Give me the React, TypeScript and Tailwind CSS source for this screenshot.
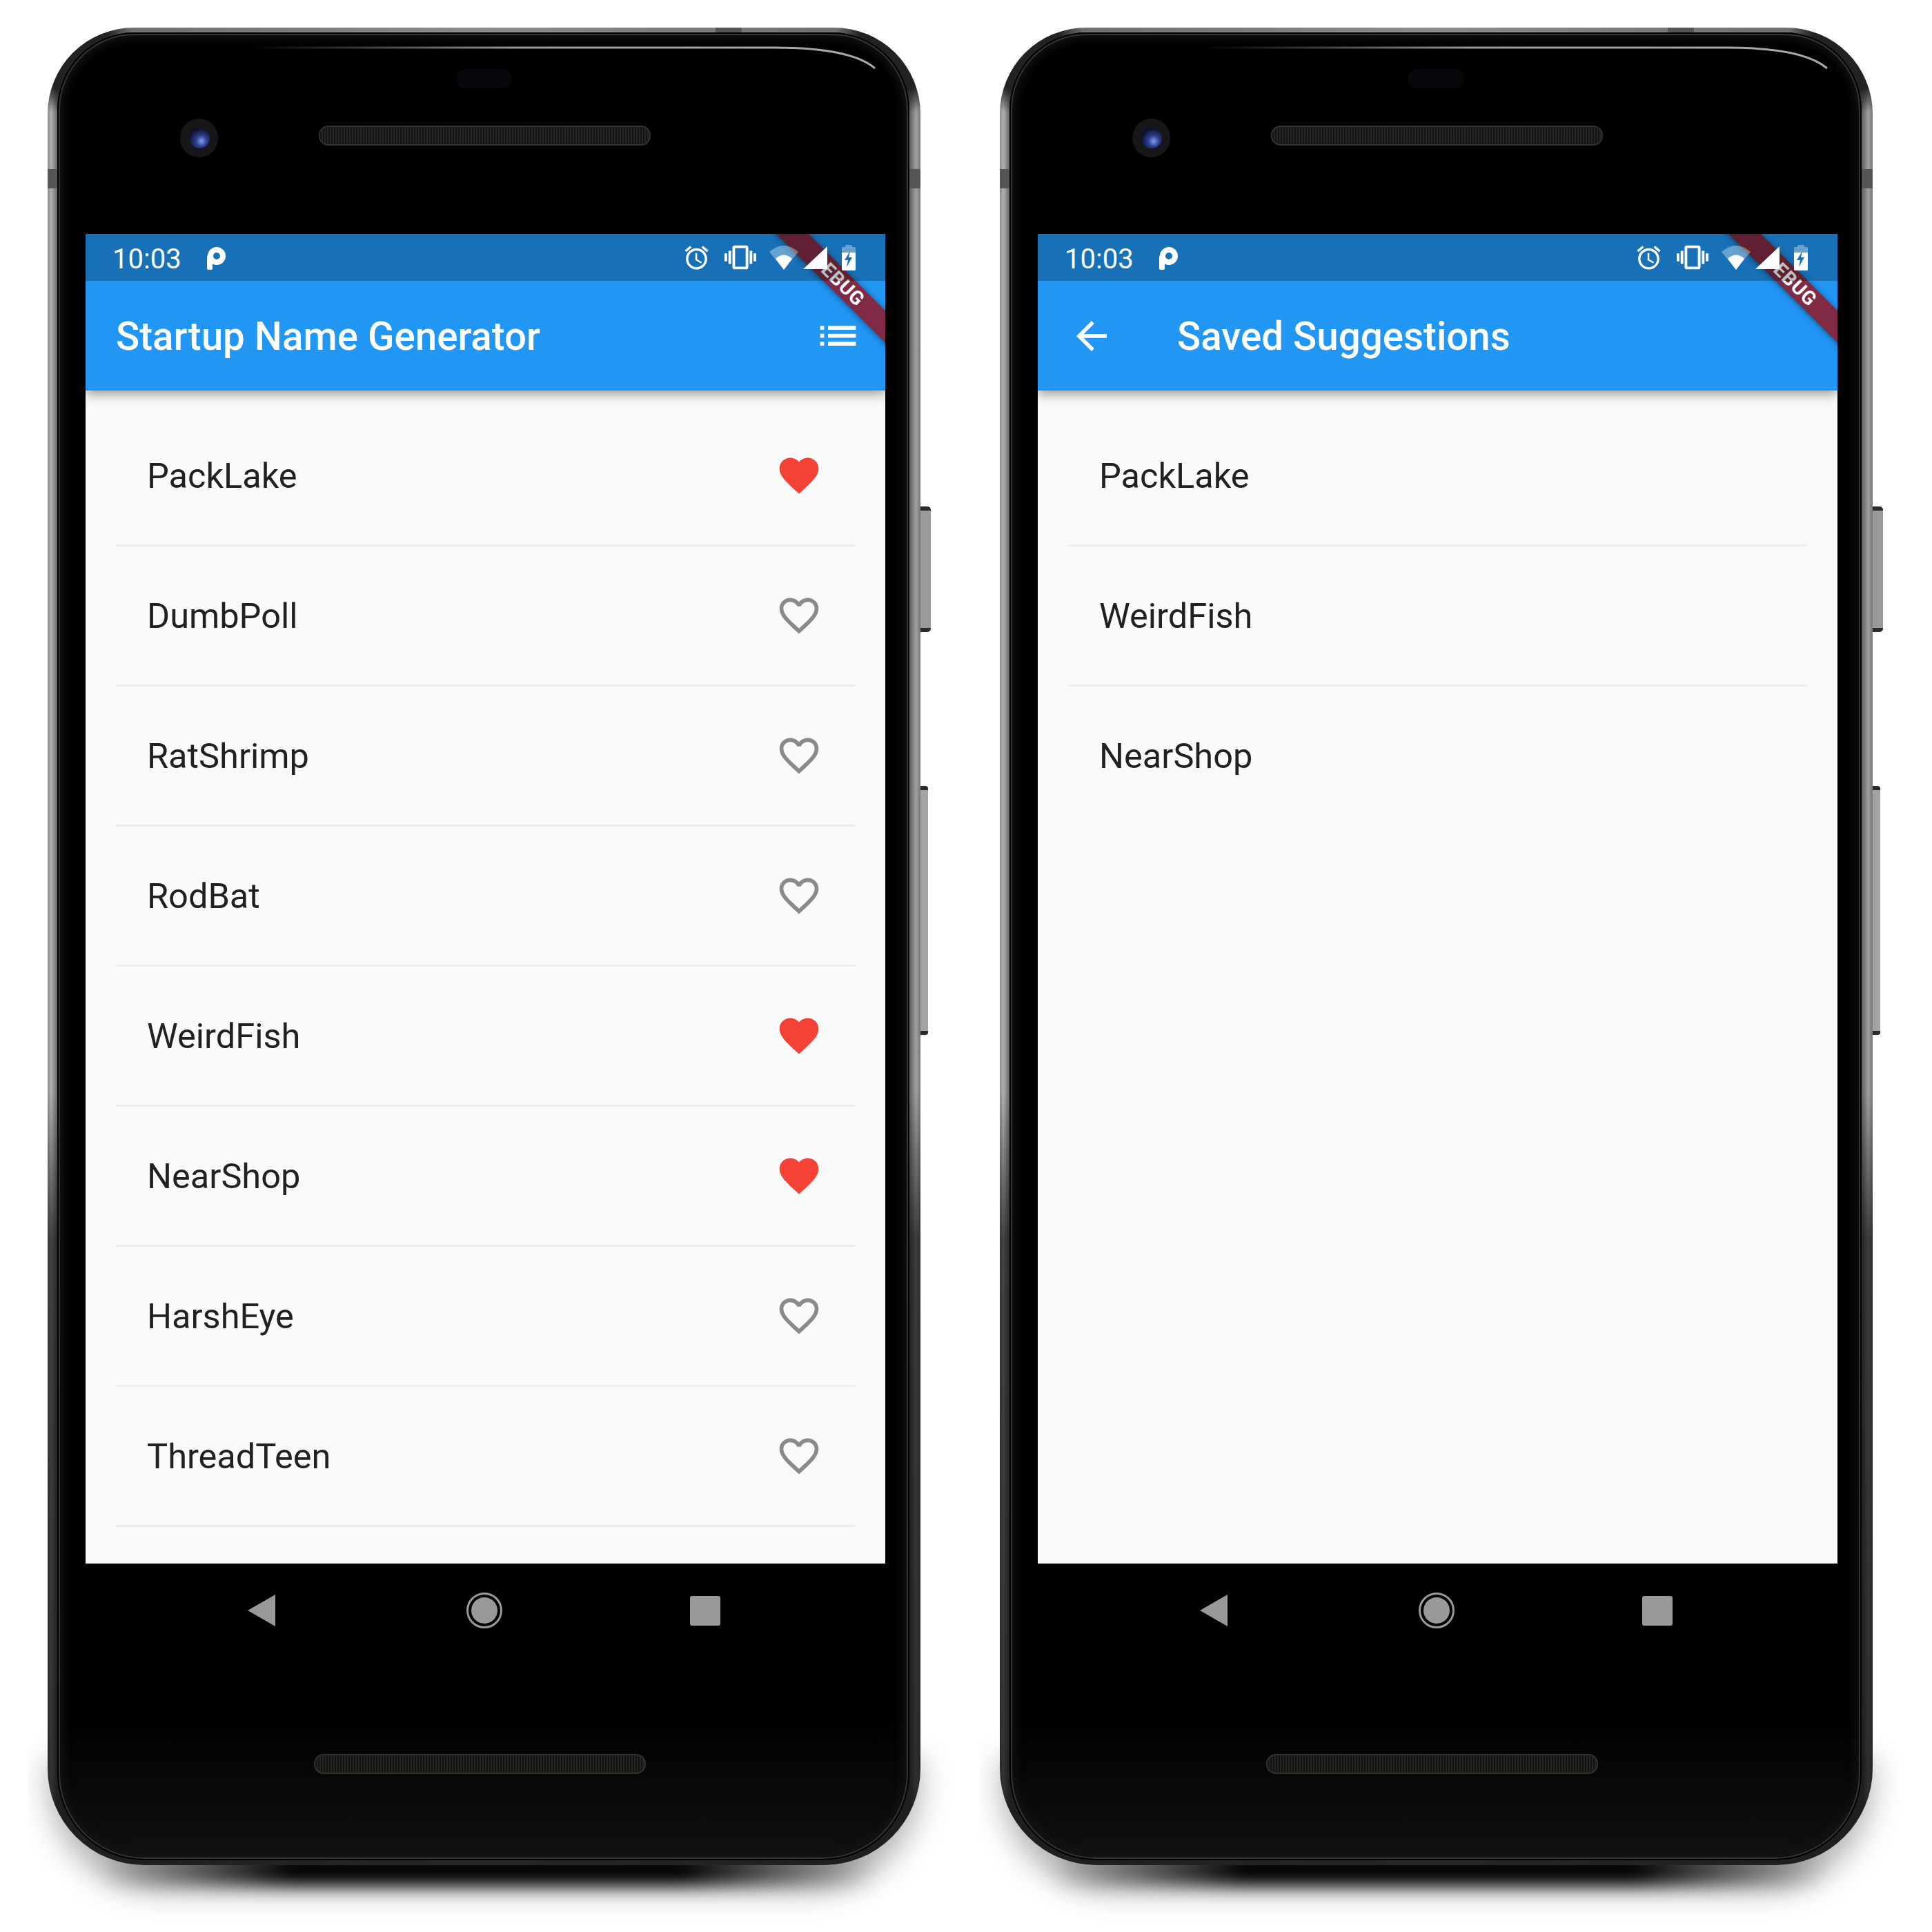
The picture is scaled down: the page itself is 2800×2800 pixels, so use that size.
import React from 'react';

const favorite =
  'M12 21.35l-1.45-1.32C5.4 15.36 2 12.28 2 8.5 2 5.42 4.42 3 7.5 3c1.74 0 3.41.81 4.5 2.09C13.09 3.81 14.76 3 16.5 3 19.58 3 22 5.42 22 8.5c0 3.78-3.4 6.86-8.55 11.54L12 21.35z';
const favoriteBorder =
  'M16.5 3c-1.74 0-3.41.81-4.5 2.09C10.91 3.81 9.24 3 7.5 3 4.42 3 2 5.42 2 8.5c0 3.78 3.4 6.86 8.55 11.54L12 21.35l1.45-1.32C18.6 15.36 22 12.28 22 8.5 22 5.42 19.58 3 16.5 3zm-4.4 15.55l-.1.1-.1-.1C7.14 14.24 4 11.39 4 8.5 4 6.5 5.5 5 7.5 5c1.54 0 3.04.99 3.57 2.36h1.87C13.46 5.99 14.96 5 16.5 5c2 0 3.5 1.5 3.5 3.5 0 2.89-3.14 5.74-7.9 10.05z';

type Item = { name: string; saved?: boolean };

const suggestions: Item[] = [
  { name: 'PackLake', saved: true },
  { name: 'DumbPoll', saved: false },
  { name: 'RatShrimp', saved: false },
  { name: 'RodBat', saved: false },
  { name: 'WeirdFish', saved: true },
  { name: 'NearShop', saved: true },
  { name: 'HarshEye', saved: false },
  { name: 'ThreadTeen', saved: false },
];

const savedList: Item[] = [{ name: 'PackLake' }, { name: 'WeirdFish' }, { name: 'NearShop' }];

const StatusBar = () => (
  <div className="relative z-10 flex h-[68px] items-center bg-black/25 pl-[39px] pr-[43px] text-white">
    <span className="pt-[5px] text-[40px] leading-none">10:03</span>
    <svg viewBox="0 0 27 33" className="ml-[37px] mt-[3px] h-[33px] w-[27px]" fill="none">
      <rect x="0" y="12" width="8" height="21" rx="2" fill="#fff" />
      <circle cx="14" cy="13" r="9" stroke="#fff" strokeWidth="8" />
    </svg>
    <div className="flex-1" />
    {/* alarm */}
    <svg viewBox="0 0 24 24" className="h-[41px] w-[41px]" fill="#fff">
      <path d="M22 5.72l-4.6-3.86-1.29 1.53 4.6 3.86L22 5.72zM7.88 3.39L6.6 1.86 2 5.71l1.29 1.53 4.59-3.85zM12.5 8H11v6l4.75 2.85.75-1.23-4-2.37V8zM12 4c-4.97 0-9 4.03-9 9s4.02 9 9 9c4.97 0 9-4.03 9-9s-4.03-9-9-9zm0 16c-3.87 0-7-3.13-7-7s3.13-7 7-7 7 3.13 7 7-3.13 7-7 7z" />
    </svg>
    {/* vibrate */}
    <svg viewBox="0 0 24 24" className="ml-[20px] h-[46px] w-[46px]" fill="#fff">
      <path d="M0 15h2V9H0v6zm3 2h2V7H3v10zm19-8v6h2V9h-2zm-3 8h2V7h-2v10zM16.5 3h-9C6.67 3 6 3.67 6 4.5v15c0 .83.67 1.5 1.5 1.5h9c.83 0 1.5-.67 1.5-1.5v-15c0-.83-.67-1.5-1.5-1.5zM16 19H8V5h8v14z" />
    </svg>
    {/* wifi */}
    <svg viewBox="0 0 42 35" className="ml-[19px] h-[35px] w-[42px]" fill="#fff">
      <path d="M0 9Q21-9 42 9L21 35Z" opacity="0.35" />
      <path d="M9 19Q21 8 33 19L21 35Z" />
    </svg>
    {/* signal */}
    <svg viewBox="0 0 35 33" className="ml-[7px] h-[33px] w-[35px]" fill="#fff">
      <polygon points="35,0 35,33 0,33" />
    </svg>
    {/* battery */}
    <svg viewBox="0 0 20 37" className="ml-[21px] h-[37px] w-[20px]" fill="#fff">
      <path d="M5 3V1.5C5 .7 5.7 0 6.5 0h7c.8 0 1.5.7 1.5 1.5V3h3.5c.8 0 1.5.7 1.5 1.5V11H0V4.500C0 3.700.7 3 1.500 3z" opacity="0.35" />
      <path d="M0 11h20v24.500c0 .8-.7 1.500-1.500 1.500h-17C.7 37 0 36.300 0 35.500z" />
      <polygon points="12,9 4,22 9,22 7,32 15,18 10,18" fill="#1f6fb3" />
    </svg>
  </div>
);

const Header = ({ title, back }: { title: string; back?: boolean }) => (
  <div className="relative z-10 h-[227px] shrink-0 overflow-hidden bg-[#2196f3] shadow-[0_5px_16px_rgba(0,0,0,0.4)]">
    {/* debug banner, the status bar darkens it */}
    <div className="absolute left-[941px] top-[50px] flex h-[33px] w-[300px] rotate-45 items-center justify-center bg-[#8b1e32]/90 shadow-[0_1px_8px_rgba(0,0,0,0.45)]">
      <span className="text-[28px] font-bold leading-none tracking-[1px] text-white">DEBUG</span>
    </div>
    <StatusBar />
    <div className="relative flex h-[159px] items-center text-white">
      {back ? (
        <>
          <svg viewBox="0 0 24 24" className="ml-[45px] h-[66px] w-[66px]" fill="#fff">
            <path d="M20 11H7.830l5.590-5.590L12 4l-8 8 8 8 1.410-1.410L7.830 13H20v-2z" />
          </svg>
          <span className="ml-[91px] pt-[3px] text-[56.5px] font-medium leading-none">{title}</span>
        </>
      ) : (
        <>
          <span className="ml-[44px] pt-[3px] text-[56.5px] font-medium leading-none">{title}</span>
          <div className="flex-1" />
          <svg viewBox="0 0 24 24" className="mr-[34px] h-[69px] w-[69px]" fill="#fff">
            <path d="M3 13h2v-2H3v2zm0 4h2v-2H3v2zm0-8h2V7H3v2zm4 4h14v-2H7v2zm0 4h14v-2H7v2zM7 7v2h14V7H7z" />
          </svg>
        </>
      )}
    </div>
  </div>
);

const Row = ({ item, divider, hearts }: { item: Item; divider: boolean; hearts: boolean }) => (
  <div
    className={`mx-[44px] flex h-[203px] items-center justify-between border-b-[3px] pl-[45px] pr-[47px] ${
      divider ? 'border-[#eeeeee]' : 'border-transparent'
    }`}
  >
    <span className="pt-[2px] text-[50.5px] leading-none text-[#212121]">{item.name}</span>
    {hearts && (
      <svg
        viewBox="0 0 24 24"
        className="h-[68px] w-[68px]"
        fill={item.saved ? '#f44336' : '#8a8a8a'}
      >
        <path d={item.saved ? favorite : favoriteBorder} />
      </svg>
    )}
  </div>
);

const NavBar = () => (
  <div className="mt-[42px] flex h-[52px] shrink-0 items-center pl-[235px]">
    <svg viewBox="0 0 40 46" className="h-[46px] w-[40px]" fill="#999999">
      <polygon points="40,0 40,46 0,23" />
    </svg>
    <div className="ml-[277px] flex h-[52px] w-[52px] items-center justify-center rounded-full border-[3px] border-[#999999]">
      <div className="h-[38px] w-[38px] rounded-full bg-[#999999]" />
    </div>
    <div className="ml-[272px] h-[43px] w-[44px] rounded-[3px] bg-[#999999]" />
  </div>
);

const Speaker = ({ className }: { className: string }) => (
  <div
    className={`h-[29px] w-[481px] shrink-0 rounded-[14px] border-[2px] border-[#33312e] bg-[repeating-linear-gradient(90deg,#141312_0px,#141312_2px,#272522_2px,#272522_4px)] ${className}`}
  />
);

const Phone = ({ title, back, items, hearts }: { title: string; back?: boolean; items: Item[]; hearts: boolean }) => (
  <div className="relative h-[2663px] w-[1265px] shrink-0">
    {/* soft shadows under the phone */}
    <div className="absolute -left-[29px] -right-[46px] top-[2440px] h-[330px] overflow-hidden">
      <div className="absolute left-[30px] right-[46px] top-[70px] h-[190px] rounded-b-[160px] bg-black/30 blur-[22px]" />
      <div className="absolute left-[100px] top-[205px] h-[48px] w-[1130px] bg-[linear-gradient(to_right,transparent,#000000_25%,#000000_75%,transparent)] blur-[12px]" />
    </div>
    {/* side buttons */}
    <div className="absolute left-[1262px] top-[694px] h-[182px] w-[18px] rounded-r-[5px] border-y-[6px] border-[#2a2a2a] bg-[#9a9a9a]" />
    <div className="absolute left-[1262px] top-[1099px] h-[361px] w-[14px] rounded-r-[4px] border-y-[6px] border-[#2a2a2a] bg-[#a3a3a3]" />
    {/* metal frame */}
    <div className="relative h-full rounded-t-[125px] rounded-b-[140px] bg-[radial-gradient(circle_at_30px_30px,#222222_60px,transparent_95px),radial-gradient(circle_at_1235px_30px,#222222_60px,transparent_95px),linear-gradient(to_bottom,transparent_58%,rgba(0,0,0,0.62)_66%,rgba(0,0,0,0.72)_100%),linear-gradient(to_right,#8a8a8a,#b0b0b0_0.4%,#6a6a6a_1.1%,#8c8c8c_50%,#6a6a6a_98.9%,#a0a0a0_99.5%,#777777)] pb-[7px] pl-[14px] pr-[16px] pt-[7px]">
      <div className="absolute left-0 top-[205px] h-[28px] w-[14px] bg-[#555555]" />
      <div className="absolute right-0 top-[205px] h-[28px] w-[16px] bg-[#555555]" />
      <div className="absolute left-[968px] top-0 h-[7px] w-[38px] bg-[#555555]" />
      <div className="relative flex h-full flex-col rounded-t-[112px] rounded-b-[126px] bg-[linear-gradient(to_bottom,#000000_92%,#111111_100%)] pl-[41px] pr-[35px] shadow-[inset_0_0_0_2px_#000000,inset_0_0_0_4px_#333333,inset_0_0_14px_8px_#141414]">
        {/* glass highlight */}
        <svg viewBox="0 0 1235 120" className="absolute left-0 top-0 h-[120px] w-[1235px]" fill="none">
          <defs>
            <linearGradient id="glass" x1="0" x2="1" y1="0" y2="0">
              <stop offset="0.12" stopColor="#888888" stopOpacity="0" />
              <stop offset="0.5" stopColor="#999999" />
              <stop offset="1" stopColor="#aaaaaa" />
            </linearGradient>
          </defs>
          <path d="M157 22H1040Q1150 22 1185 52" stroke="url(#glass)" strokeWidth="3" />
        </svg>

        {/* top bezel */}
        <div className="flex h-[292px] shrink-0 flex-col">
          <div className="ml-[536px] mt-[53px] h-[28px] w-[82px] rounded-[14px] bg-[#07070b]" />
          <div className="mt-[44px] flex items-start gap-[146px] pl-[137px]">
            <div className="flex h-[56px] w-[55px] items-center justify-center rounded-full bg-[#17171a]">
              <div className="h-[30px] w-[30px] rounded-full bg-[radial-gradient(circle_at_60%_65%,#7f9fe8_0%,#2c3f8f_30%,#0a0f2a_70%)]" />
            </div>
            <Speaker className="mt-[10px]" />
          </div>
        </div>

        <div className="flex h-[1927px] shrink-0 flex-col overflow-hidden bg-[#fafafa]">
          <Header title={title} back={back} />
          <div className="pt-[23px]">
            {items.map((item, i) => (
              <Row key={item.name} item={item} hearts={hearts} divider={hearts || i < items.length - 1} />
            ))}
          </div>
        </div>

        {/* bottom bezel */}
        <NavBar />
        <Speaker className="ml-[331px] mt-[182px]" />
      </div>
    </div>
  </div>
);

export default function App() {
  return (
    <div className="flex h-[2800px] w-[2800px] gap-[115px] overflow-hidden bg-white pl-[69px] pt-[40px] font-['Roboto',sans-serif]">
      <Phone title="Startup Name Generator" items={suggestions} hearts />
      <Phone title="Saved Suggestions" back items={savedList} hearts={false} />
    </div>
  );
}
